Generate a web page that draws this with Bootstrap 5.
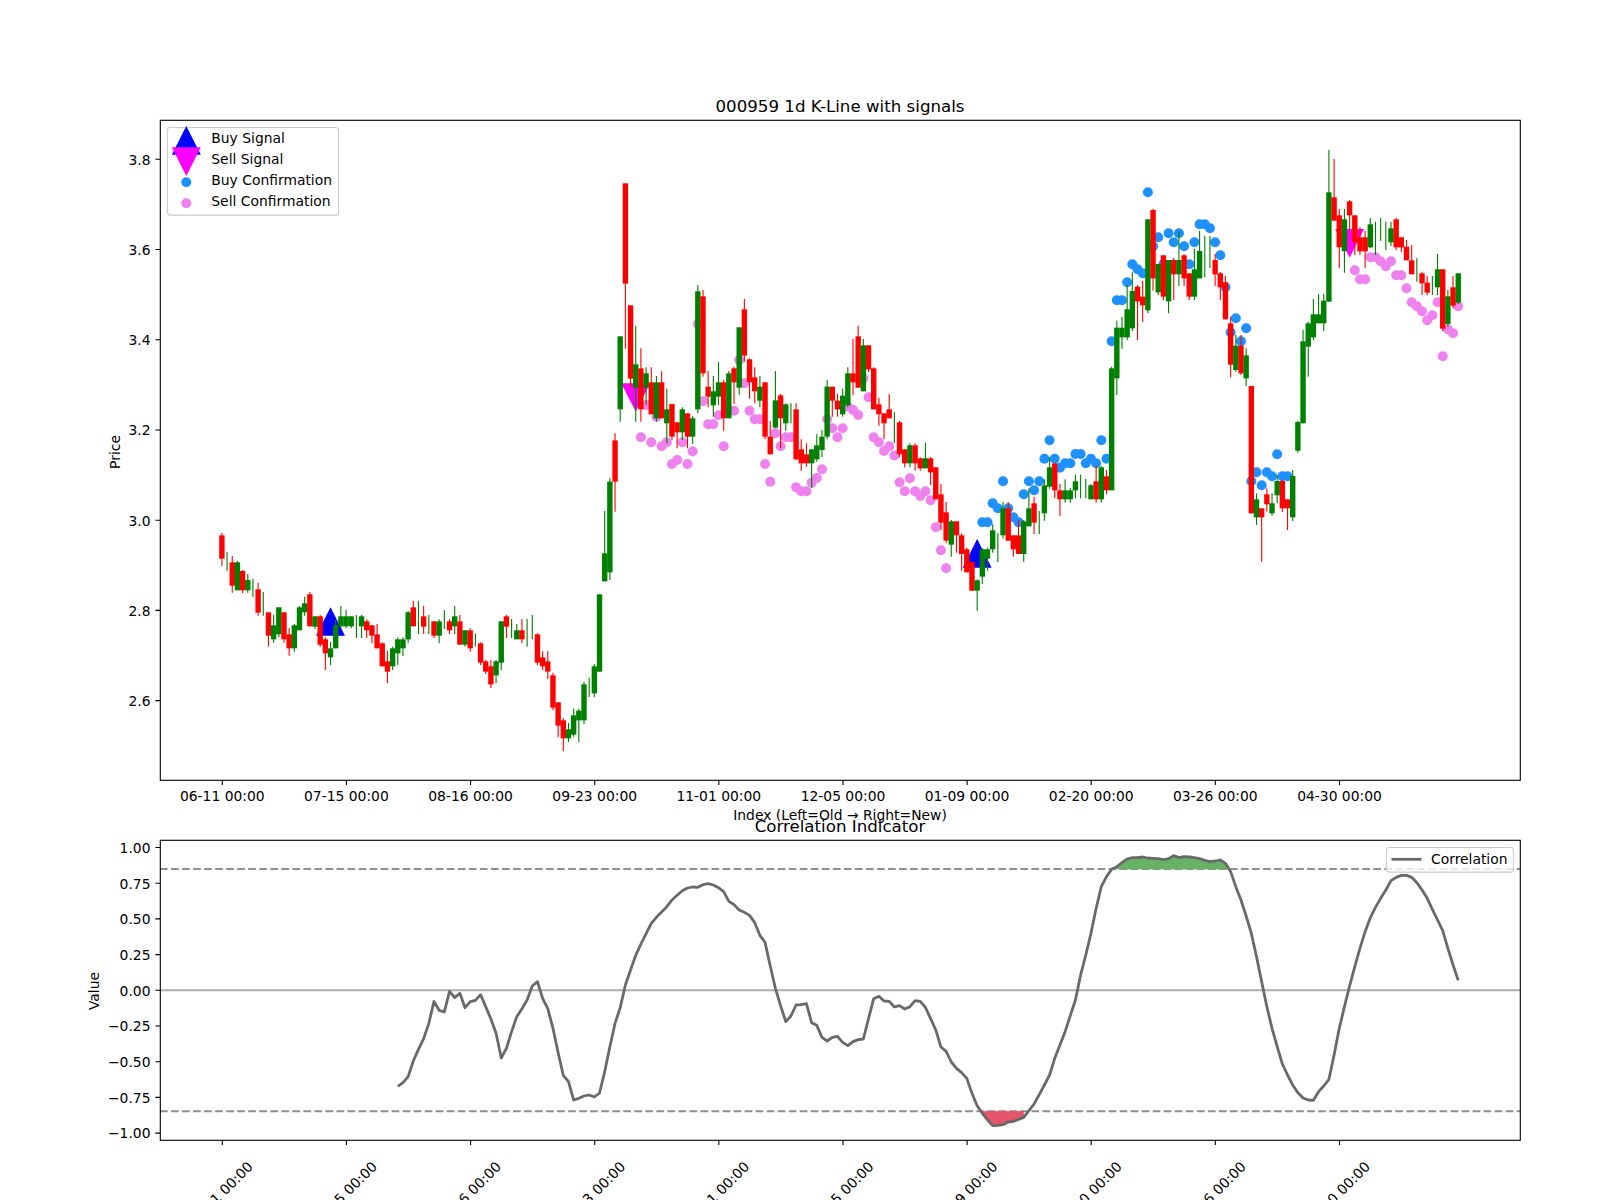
<!DOCTYPE html>
<html lang="en">
<head>
<meta charset="utf-8">
<title>000959 1d K-Line with signals</title>
<link href="https://cdn.jsdelivr.net/npm/bootstrap@5.3.0/dist/css/bootstrap.min.css" rel="stylesheet">
<style>
html,body{margin:0;padding:0;background:#fff;overflow:hidden}
.fig-wrap{width:1600px;height:1200px}
.fig-svg{display:block;width:1600px;height:1200px}
.fig-svg text{font-family:"DejaVu Sans",sans-serif;font-size:13.89px;fill:#000}
.fig-svg text.fig-title{font-size:16.67px;text-anchor:middle}
.fig-svg text.t-mid{text-anchor:middle}
.fig-svg text.t-end{text-anchor:end}
.spine{fill:none;stroke:#000;stroke-width:1.11}
.tickm{fill:none;stroke:#000;stroke-width:1.11}
.leg-box{fill:rgba(255,255,255,.8);stroke:#ccc;stroke-width:1.11}
.ref-dash{stroke:#8f8f8f;stroke-width:2.08;stroke-dasharray:7.7 3.33;fill:none}
.ref-zero{stroke:#adadad;stroke-width:2.08;fill:none}
.corr-line{stroke:#696969;stroke-width:2.78;fill:none;stroke-linejoin:round}
.fill-up{fill:#66b366;stroke:#66b366;stroke-width:.6}
.fill-dn{fill:#e7556b;stroke:#e7556b;stroke-width:.6}
</style>
</head>
<body>
<div class="fig-wrap bg-white p-0 m-0 d-flex">
<svg class="fig-svg" viewBox="0 0 1600 1200" xmlns="http://www.w3.org/2000/svg">
  <g id="main-plot"></g>
  <rect class="spine" x="160.3" y="120.3" width="1360" height="660"/>
  <text class="fig-title" x="840" y="112">000959 1d K-Line with signals</text>
  <path class="tickm" d="M155.4 159.3H160M155.4 249.5H160M155.4 339.7H160M155.4 430H160M155.4 520.2H160M155.4 610.4H160M155.4 700.6H160"/>
  <text class="t-end" x="150.5" y="164.6">3.8</text>
  <text class="t-end" x="150.5" y="254.8">3.6</text>
  <text class="t-end" x="150.5" y="345">3.4</text>
  <text class="t-end" x="150.5" y="435.3">3.2</text>
  <text class="t-end" x="150.5" y="525.5">3.0</text>
  <text class="t-end" x="150.5" y="615.7">2.8</text>
  <text class="t-end" x="150.5" y="705.9">2.6</text>
  <text class="t-mid" transform="translate(120 452) rotate(-90)">Price</text>
  <path class="tickm" d="M222.3 780V785M346.4 780V785M470.6 780V785M594.7 780V785M718.8 780V785M843 780V785M967.1 780V785M1091.2 780V785M1215.3 780V785M1339.5 780V785"/>
  <text class="t-mid" x="222.3" y="801">06-11 00:00</text>
  <text class="t-mid" x="346.4" y="801">07-15 00:00</text>
  <text class="t-mid" x="470.6" y="801">08-16 00:00</text>
  <text class="t-mid" x="594.7" y="801">09-23 00:00</text>
  <text class="t-mid" x="718.8" y="801">11-01 00:00</text>
  <text class="t-mid" x="843" y="801">12-05 00:00</text>
  <text class="t-mid" x="967.1" y="801">01-09 00:00</text>
  <text class="t-mid" x="1091.2" y="801">02-20 00:00</text>
  <text class="t-mid" x="1215.3" y="801">03-26 00:00</text>
  <text class="t-mid" x="1339.5" y="801">04-30 00:00</text>
  <text class="t-mid" x="840" y="820">Index (Left=Old → Right=New)</text>

  <rect class="leg-box" x="167.5" y="127.5" width="171" height="87.6" rx="2.8"/>
  <polygon points="186.3,126 200.8,154.7 171.8,154.7" fill="#0000ff"/>
  <polygon points="171.8,147.3 200.8,147.3 186.3,176" fill="#ff00ff"/>
  <circle cx="186.3" cy="182.3" r="5" fill="#1e90ff"/>
  <circle cx="186.3" cy="203.3" r="5" fill="#ee82ee"/>
  <text x="211.3" y="143.3">Buy Signal</text>
  <text x="211.3" y="164.3">Sell Signal</text>
  <text x="211.3" y="185.3">Buy Confirmation</text>
  <text x="211.3" y="206.3">Sell Confirmation</text>

  <line class="ref-zero" x1="160" x2="1520" y1="990.3" y2="990.3"/>
  <line class="ref-dash" x1="160" x2="1520" y1="869" y2="869"/>
  <line class="ref-dash" x1="160" x2="1520" y1="1111.3" y2="1111.3"/>
  <g id="corr-plot"></g>
  <rect class="spine" x="160.3" y="840.3" width="1360" height="300"/>
  <text class="fig-title" x="840" y="831.7">Correlation Indicator</text>
  <path class="tickm" d="M155.4 847.5H160M155.4 883.2H160M155.4 918.9H160M155.4 954.6H160M155.4 990.3H160M155.4 1026H160M155.4 1061.7H160M155.4 1097.4H160M155.4 1133.1H160"/>
  <text class="t-end" x="150.5" y="852.8">1.00</text>
  <text class="t-end" x="150.5" y="888.5">0.75</text>
  <text class="t-end" x="150.5" y="924.2">0.50</text>
  <text class="t-end" x="150.5" y="959.9">0.25</text>
  <text class="t-end" x="150.5" y="995.6">0.00</text>
  <text class="t-end" x="150.5" y="1031.3">−0.25</text>
  <text class="t-end" x="150.5" y="1067">−0.50</text>
  <text class="t-end" x="150.5" y="1102.7">−0.75</text>
  <text class="t-end" x="150.5" y="1138.4">−1.00</text>
  <text class="t-mid" transform="translate(99 991) rotate(-90)">Value</text>
  <path class="tickm" d="M222.3 1140V1145M346.4 1140V1145M470.6 1140V1145M594.7 1140V1145M718.8 1140V1145M843 1140V1145M967.1 1140V1145M1091.2 1140V1145M1215.3 1140V1145M1339.5 1140V1145"/>
  <text class="t-mid" transform="translate(220.3 1194) rotate(-45)" y="5">06-11 00:00</text>
  <text class="t-mid" transform="translate(344.4 1194) rotate(-45)" y="5">07-15 00:00</text>
  <text class="t-mid" transform="translate(468.6 1194) rotate(-45)" y="5">08-16 00:00</text>
  <text class="t-mid" transform="translate(592.7 1194) rotate(-45)" y="5">09-23 00:00</text>
  <text class="t-mid" transform="translate(716.8 1194) rotate(-45)" y="5">11-01 00:00</text>
  <text class="t-mid" transform="translate(841 1194) rotate(-45)" y="5">12-05 00:00</text>
  <text class="t-mid" transform="translate(965.1 1194) rotate(-45)" y="5">01-09 00:00</text>
  <text class="t-mid" transform="translate(1089.2 1194) rotate(-45)" y="5">02-20 00:00</text>
  <text class="t-mid" transform="translate(1213.3 1194) rotate(-45)" y="5">03-26 00:00</text>
  <text class="t-mid" transform="translate(1337.5 1194) rotate(-45)" y="5">04-30 00:00</text>
  <rect class="leg-box" x="1386.5" y="847.5" width="127" height="24.6" rx="2.8"/>
  <line x1="1391.5" x2="1421.5" y1="859.3" y2="859.3" stroke="#696969" stroke-width="2.78"/>
  <text x="1431" y="864.3">Correlation</text>
</svg>
</div>
<script>
(function(){
var X0=221.9,S=5.173,BW=5.4,NS='http://www.w3.org/2000/svg';
function x(i){return X0+S*i;}
var Z2=[['r',166,236,158,258],['g',0,0,216,272],['r',247,317,228,338],['g',247,331,243,331],['r',273,331,270,340],['g',300,331,282,338],['g',0,0,296,352],['r',328,398,308,407],['g',0,0,336,407],['r',397,467,397,500],
['g',436,478,404,488],['g',382,463,382,472],['r',397,478,397,488],['r',463,505,444,527],['g',436,505,432,515],['g',382,451,378,451],['g',370,397,350,407],['r',343,439,336,439],['g',409,440,409,447],['r',409,494,405,500],
['r',478,520,472,570],['g',505,532,485,555],['g',436,505,420,505],['g',409,439,378,445],['g',409,439,390,445],['g',409,439,409,445],['g',0,0,405,474],['g',409,439,405,474],['r',424,451,418,474],['r',436,467,436,490],
['r',463,505,432,505],['r',490,559,487,559],['r',544,575,512,609],['g',505,559,500,570],['g',478,520,472,555],['g',478,505,472,528],['g',397,478,393,488],['r',382,439,362,439],['g',0,0,362,462],['r',409,440,378,462],
['g',0,0,405,462],['r',424,467,424,474],['g',424,467,418,490],['g',0,0,390,447],['r',424,451,418,462],['g',409,439,378,462],['r',424,494,405,494],['g',451,494,451,500],['r',451,505,445,515],['g',0,0,460,500],
['r',490,548,487,555],['r',544,575,540,582],['r',559,613,540,624],['g',544,586,540,609],['g',424,548,424,570],['r',409,440,405,474],['g',0,0,417,474],['g',451,478,432,478],['r',451,478,417,490],['g',0,0,417,500],
['g',0,0,405,478],['r',463,548,460,555],['r',532,559,514,570],['r',544,575,514,597],['r',586,683,578,690],['r',667,737,667,772],['r',721,775,715,813],['g',748,775,729,786],['g',706,764,686,770],['g',692,721,686,786],
['g',613,721,605,732],['g',0,0,593,651],['g',559,640,552,651],['g',343,575,343,575],['g',220,304,93,304],['g',5,277,-5,300]];
var Z1=[['r',1021,1145,1000,1235]];
var Z3=[['g',529,748,529,785],['r',70,371,70,566],['r',436,656,436,680],['g',613,683,497,785],['r',625,748,565,785],['g',640,683,622,735],['r',667,763,622,763],['g',667,775,648,785],['r',667,775,634,775],['g',748,790,686,850],
['r',732,830,732,840],['r',787,817,787,865],['g',748,817,742,840],['r',760,830,760,865],['g',775,830,768,852],['g',394,748,375,760],['r',409,640,390,650],['r',680,710,633,742],['g',694,736,648,770],['g',667,710,605,735],
['r',667,775,660,812],['g',640,775,633,775],['r',625,667,620,732],['g',502,683,502,704],['r',448,587,417,605],['r',598,667,595,716],['r',652,694,622,730],['g',680,722,648,742],['r',667,830,667,838],['r',830,883,783,883],
['g',721,803,633,803],['r',706,775,702,865],['g',733,790,730,812],['g',0,0,730,790],['r',748,898,730,900],['r',868,910,838,932],['r',883,910,850,920],['g',868,910,868,984],['g',856,898,822,905],['g',830,870,810,892],
['g',680,830,660,838],['r',680,722,680,770],['r',722,748,702,770],['g',707,763,686,770],['g',640,736,622,742],['r',640,667,537,705],['r',529,683,497,683],['g',556,694,537,694],['r',556,628,556,636],['r',625,748,622,748],
['r',733,763,713,797],['r',760,790,760,838],['r',748,775,702,775],['g',0,0,757,850],['r',787,883,783,892]];
var Z4=[['r',208,250,208,262],['g',196,250,190,262],['r',196,250,190,272],['r',235,265,232,272],['g',235,265,188,265],['r',235,277,232,315],['r',262,358,262,358],['r',343,428,312,450],['r',397,482,366,490],['g',424,494,420,530],
['r',424,466,424,518],['r',466,522,460,572],['r',508,577,503,577],['r',546,632,546,632],['g',601,632,598,692],['g',508,590,505,612],['g',508,536,503,572],['g',451,508,433,518],['g',0,0,460,546],['g',385,466,366,476],
['r',385,482,366,482],['r',466,508,466,530],['r',466,522,420,522],['g',424,522,420,546],['g',385,439,325,439],['r',370,428,350,462],['g',0,0,393,462],['g',316,400,298,422],['g',262,320,232,326],['r',250,331,250,355],
['r',331,358,312,408],['g',331,358,298,368],['g',331,358,324,368],['g',304,331,284,355],['g',0,0,284,355],['g',0,0,296,355],['g',316,358,312,358],['r',304,358,258,368],['g',262,358,258,368],['r',289,331,270,343]];
var Z5a=[['g',595,961,590,961],['g',473,625,452,675],['g',473,502,440,536],['g',418,502,345,510],['g',363,475,307,483],['r',350,394,345,510],['r',380,406,332,456],['g',148,421,148,430],['r',120,325,116,362],['g',282,367,282,375],
['r',256,380,256,390],['g',270,394,270,430],['r',270,313,264,390],['g',270,313,183,348],['r',256,325,252,348],['r',310,380,310,390],['g',298,380,237,390],['g',243,325,183,325],['g',0,0,198,322],['g',0,0,198,294],
['r',270,313,252,348],['r',310,352,306,390],['r',337,448,318,448],['r',460,584,440,622],['g',527,600,495,606],['r',527,610,495,615],['g',556,625,535,648]];
var Z10=[['r',108,490,108,490],['g',448,502,430,525],['r',475,502,475,635],['r',433,463,415,485],['g',460,490,430,497],['g',393,436,375,460],['r',393,475,388,486],['r',448,475,448,540],['g',378,502,360,513],['g',216,302,212,308]];
var Z5b=[['g',514,760,480,760],['g',460,530,455,620],['g',433,502,387,510],['g',433,460,372,460],['g',392,460,372,483]];
var Z6=[['g',157,485,30,485],['r',172,242,57,242],['r',226,322,207,385],['g',238,334,207,398],['r',184,226,180,270],['r',226,307,226,345],['r',292,334,262,345],['r',292,334,272,385],['g',253,322,234,325],['g',0,0,245,345],
['g',0,0,234,303],['g',0,0,245,330],['g',265,307,245,318],['r',238,322,234,330],['r',292,322,292,335],['r',320,361,300,361],['r',361,403,315,403],['g',0,0,354,425],['r',400,430,395,465],['r',428,458,408,465],
['g',0,0,408,465],['g',388,442,342,465],['r',388,566,388,573],['g',469,552,450,560],['r',442,497,408,505],['g',400,488,400,492]];
var segs=[[480,Z2],[100,Z1],[160,Z3],[380,Z4],[170,Z5a],[350,Z10],[170,Z5b],[140,Z6]];
var violet={81:437.3,82:405,83:442.3,84:416.7,85:446.3,86:442.3,87:464,88:460,89:442.3,90:464,91:451.3,92:324,93:401.3,94:424.3,95:424.3,96:415.3,97:446.3,98:410,99:410.7,100:360,101:383.3,102:410.7,103:419.3,104:419.3,105:464,106:481.7,107:433.3,108:446.3,109:437.3,110:437.3,111:487.3,112:491.3,113:491.3,114:482.7,115:478,116:469.3,117:419.3,118:428.3,119:437.3,120:428.3,121:406.7,122:410,123:415,124:378.3,125:397.3,126:437.3,127:442.3,128:451,129:446.3,130:455.5,131:482.3,132:491.3,133:478.3,134:491.3,135:496,136:491.3,137:500.3,138:527.3,139:550.3,140:568.3,
219:270.3,220:279.3,221:279.3,222:257.3,223:257.3,224:261.3,225:266.3,226:261.3,227:275.3,228:275.3,229:288.3,230:302.3,231:306.3,232:311.3,233:320.3,234:315.3,235:302.3,236:356.3,237:329.3,238:333.3,239:306.3};
var blue={147:522.3,148:522.3,149:503.3,150:508.3,151:481.3,152:508.3,153:517.3,154:522.3,155:494.3,156:481.3,157:490.3,158:481.3,159:458.7,160:440.3,161:458.7,162:467.7,163:463.3,164:463.3,165:454,166:454,167:463.3,168:458.7,169:463.3,170:440.3,171:458.7,172:341.3,173:300.3,174:300.3,175:282.3,176:264.3,177:269.3,178:273.3,179:192.3,180:246.3,181:237.3,182:264.3,183:233.3,184:242.3,185:233.3,186:246.3,187:264.3,188:242.3,189:224.3,190:224.3,191:228.3,192:242.3,193:255.3,194:287.3,195:332.3,196:318.3,197:341.3,198:328.3,199:481.3,200:472.3,201:485.3,202:472.3,203:476.3,204:454.3,205:476.3,206:476.3};
var h='';
function tri(cx,a,b){return '<polygon points="'+cx+','+a+' '+(cx+14.5)+','+b+' '+(cx-14.5)+','+b+'" fill="';}
h+=tri(x(21),607.3,635.7)+'#0000ff"/>'+tri(x(146),539,567.7)+'#0000ff"/>';
h+='<polygon points="'+(x(80)-14.5)+',383.3 '+(x(80)+14.5)+',383.3 '+x(80)+',411.7" fill="#ff00ff"/>';
h+='<polygon points="'+(x(218)-14.5)+',229 '+(x(218)+14.5)+',229 '+x(218)+',257.7" fill="#ff00ff"/>';
var k;
for(k in blue){h+='<circle cx="'+x(+k).toFixed(2)+'" cy="'+blue[k]+'" r="5" fill="#1e90ff"/>';}
for(k in violet){h+='<circle cx="'+x(+k).toFixed(2)+'" cy="'+violet[k]+'" r="5" fill="#ee82ee"/>';}
var idx=0;
segs.forEach(function(s){var y0=s[0];s[1].forEach(function(c){
  var col=c[0]==='r'?'#ff0000':'#008000',cx=x(idx);
  h+='<line x1="'+cx.toFixed(2)+'" x2="'+cx.toFixed(2)+'" y1="'+(y0+c[3]/3).toFixed(2)+'" y2="'+(y0+c[4]/3).toFixed(2)+'" stroke="'+col+'" stroke-width="1.11"/>';
  if(c[2]>c[1]){h+='<rect x="'+(cx-BW/2).toFixed(2)+'" y="'+(y0+c[1]/3).toFixed(2)+'" width="'+BW+'" height="'+((c[2]-c[1])/3).toFixed(2)+'" fill="'+col+'"/>';}
  idx++;
});});
document.getElementById('main-plot').innerHTML=h;

var L1=[679,668,650,603,568,536,490,424,451,456,394,413,400,443,425,421,404,440,477,520,594,565,515,470,446,420,378,365,415,446,505,578,646,665,720,715,708,705,711,699,635,560,490,443,375,330,286,252,221,190,172,156,140,120,106,92,84,81,82,74,71,75,83,95,124,134,150,157,166,188,226,247,318,385,437,485,468,435,434,431,488,496,532,543,532,529,547,557,545,539,537,476,416,409,423,424,441];
var L2=[467,477,470,452,454,472,506,540,591,604,636,655,668,685,730,767,790,810,827,826,824,816,814,808,802,782,762,734,705,675,625,585,545,497,450,375,315,250,175,110,80,58,50,38,27,23,23,21,24,25,26,29,26,17,23,20,21,23,26,31,35,33,30,40,65,110,150,198,250,320,395,470,535,590,642,675,705,728,744,750,751,725,708,688,615,535,470,408,350,295,245,203,172,145,120,92];
var L3=[232,226,226,232,248,270,295,328,360,392,445,495,541];
var P={},i=34;
L1.forEach(function(v){P[i++]=860+v/3;});L2.forEach(function(v){P[i++]=850+v/3;});L3.forEach(function(v){P[i++]=800+v/3;});
var d='',j;
for(j=34;j<=239;j++){d+=(j===34?'M':'L')+x(j).toFixed(2)+' '+P[j].toFixed(2);}
var up='M'+x(173).toFixed(2)+' 869',dn='M'+x(147).toFixed(2)+' 1111.3';
for(j=173;j<=194;j++){up+='L'+x(j).toFixed(2)+' '+P[j].toFixed(2);}
up+='L1227.3 869Z';
for(j=147;j<=155;j++){dn+='L'+x(j).toFixed(2)+' '+P[j].toFixed(2);}
dn+='L'+x(155).toFixed(2)+' 1111.3Z';
document.getElementById('corr-plot').innerHTML='<path class="fill-up" d="'+up+'"/><path class="fill-dn" d="'+dn+'"/><path class="corr-line" d="'+d+'"/>';
})();
</script>
<script src="https://cdn.jsdelivr.net/npm/bootstrap@5.3.0/dist/js/bootstrap.bundle.min.js"></script>
</body>
</html>
